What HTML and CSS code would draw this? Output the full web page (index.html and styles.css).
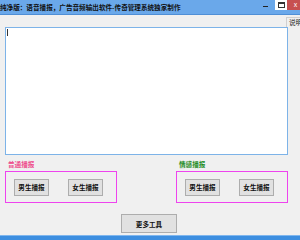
FILE: index.html
```html
<!DOCTYPE html>
<html lang="zh">
    <head>
        <meta charset="utf-8">
        <title>语音播报</title>
        <link rel="stylesheet" href="styles.css">
    </head>

    <body>
        <div class="window">
            <div class="titlebar">
                <div class="title">纯净版：语音播报，广告音频输出软件-传奇管理系统独家制作</div>
                <div class="controls">
                    <span class="btn-min"></span>
                    <span class="btn-max"><i></i></span>
                    <span class="btn-close">x</span>
                </div>
            </div>

            <div class="toolbar">
                <span class="help">说明</span>
            </div>

            <div class="editor-row">
                <div class="editor"><span class="caret"></span></div>
            </div>

            <div class="groups">
                <div class="group">
                    <div class="group-label pink">普通播报</div>
                    <div class="group-box">
                        <button>男生播报</button>
                        <button>女生播报</button>
                    </div>
                </div>
                <div class="group">
                    <div class="group-label green">情感播报</div>
                    <div class="group-box">
                        <button>男生播报</button>
                        <button>女生播报</button>
                    </div>
                </div>
            </div>

            <div class="footer">
                <button class="more">更多工具</button>
            </div>

            <div class="taskbar"></div>
        </div>
    </body>
</html>
```

FILE: styles.css
```css
body {
    margin: 0;
    font-family: "Noto Sans CJK SC", "Noto Sans", sans-serif;
    background-color: #f0f0f0;
}

.window {
    width: 300px;
    height: 240px;
    overflow: hidden;
    display: flex;
    flex-direction: column;
    background-color: #f0f0f0;
}

.titlebar {
    height: 15px;
    display: flex;
    justify-content: space-between;
    background-color: #6aa8ea;
    border-bottom: 1px solid #4f8fd6;
    box-sizing: border-box;
}

.title {
    font-size: 6.6px;
    line-height: 14px;
    font-weight: bold;
    color: #111;
    white-space: nowrap;
}

.controls {
    display: flex;
    height: 10px;
}

.btn-min {
    width: 8px;
    margin-right: 5px;
    position: relative;
}

.btn-min::after {
    content: "";
    position: absolute;
    left: 1px;
    top: 6px;
    width: 5px;
    height: 1px;
    background-color: #222;
}

.btn-max {
    width: 12px;
    background-color: #fff;
    display: flex;
    align-items: center;
    justify-content: center;
}

.btn-max i {
    width: 5px;
    height: 3px;
    border: 1px solid #333;
    border-top-width: 2px;
}

.btn-close {
    width: 13px;
    background-color: #c75050;
    color: #fff;
    font-size: 7px;
    line-height: 9px;
    text-align: center;
    padding-left: 4px;
    box-sizing: border-box;
}

.toolbar {
    height: 12px;
    display: flex;
    justify-content: flex-end;
}

.help {
    width: 11px;
    margin-top: 2px;
    padding-left: 2px;
    border-left: 1px solid #d0d0d0;
    border-top: 1px solid #d0d0d0;
    font-size: 6.6px;
    line-height: 9px;
    color: #222;
    overflow: hidden;
    white-space: nowrap;
}

.editor-row {
    padding-left: 5px;
}

.editor {
    width: 283px;
    height: 128px;
    box-sizing: border-box;
    border: 1px solid #7db3e8;
    background-color: #fff;
    padding: 1px 0 0 1px;
}

.caret {
    display: block;
    width: 1px;
    height: 7px;
    background-color: #333;
}

.groups {
    display: flex;
    justify-content: space-between;
    width: 283px;
    margin: 5px 0 0 5px;
}

.group {
    width: 112px;
}

.group-label {
    height: 11px;
    padding-left: 3px;
    font-size: 6.6px;
    line-height: 9px;
    font-weight: bold;
}

.group-label.pink {
    color: #ee4b8c;
}

.group-label.green {
    color: #1e8c1e;
}

.group-box {
    height: 32px;
    box-sizing: border-box;
    border: 1px solid #ee44ee;
    display: flex;
    align-items: center;
    padding: 0 0 0 8px;
    gap: 19px;
}

button {
    width: 35px;
    height: 17px;
    padding: 0;
    font-family: "Noto Sans CJK SC", "Noto Sans", sans-serif;
    font-size: 6.6px;
    font-weight: bold;
    color: #111;
    background-color: #e1e1e1;
    border: 1px solid #adadad;
    border-radius: 0;
}

.footer {
    display: flex;
    justify-content: center;
    padding: 11px 0 0 0;
    height: 21px;
}

.more {
    width: 56px;
    height: 19px;
    margin-left: -2px;
}

.taskbar {
    flex: 1;
    margin-top: 0;
    background-color: #3d8ee0;
    border-top: 1px solid #7fb6ee;
}
```
